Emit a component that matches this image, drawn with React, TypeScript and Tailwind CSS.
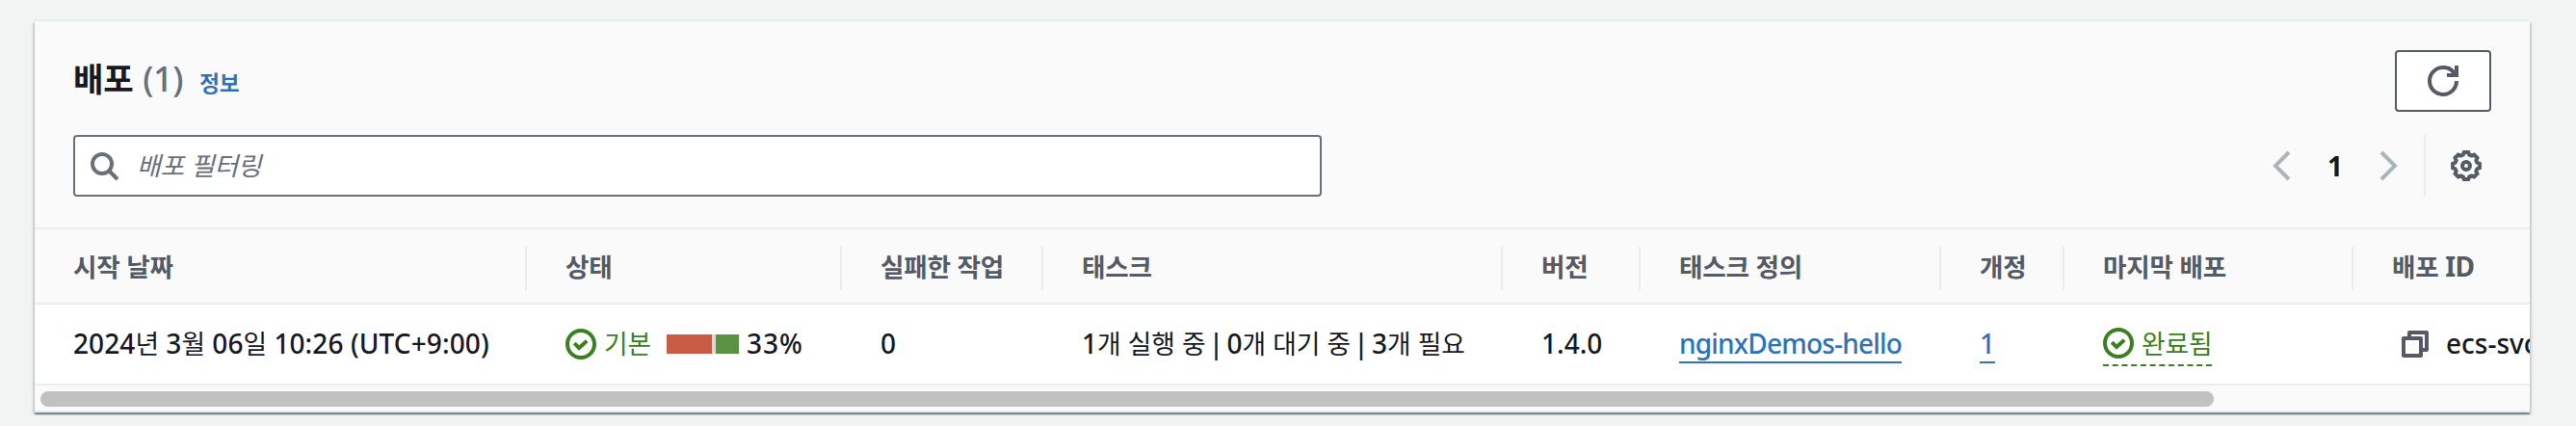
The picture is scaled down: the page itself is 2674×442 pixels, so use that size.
import React from "react";

const HANGUL = /([\u3131-\uD79D]+)/;

/* Hangul runs are set in the CJK family at a slightly smaller advance than the Latin text. */
function T({ children, bold = false }: { children: string; bold?: boolean }) {
  return (
    <>
      {children.split(HANGUL).map((part, i) =>
        HANGUL.test(part) ? (
          <span
            key={i}
            className={
              bold
                ? "text-[0.95em] tracking-[-0.008em] font-bold"
                : "text-[0.955em] tracking-[-0.005em] font-normal"
            }
          >
            {part}
          </span>
        ) : (
          <React.Fragment key={i}>{part}</React.Fragment>
        ),
      )}
    </>
  );
}

function Pipe() {
  return <span className="-mx-[4px] inline-block">|</span>;
}

function CheckCircle() {
  return (
    <svg viewBox="0 0 16 16" className="size-8 shrink-0" fill="none" stroke="currentColor" strokeWidth="2">
      <circle cx="8" cy="8" r="7" />
      <path d="m4.6 7.6 2.4 2.4 4.1-3.6" />
    </svg>
  );
}

function Search() {
  return (
    <svg viewBox="0 0 16 16" className="size-8 shrink-0 text-[#687078]" fill="none" stroke="currentColor" strokeWidth="2">
      <circle cx="7" cy="7" r="5" />
      <path d="m15 15-4.5-4.5" />
    </svg>
  );
}

function Refresh() {
  return (
    <svg viewBox="0 0 16 16" className="size-8" fill="none" stroke="currentColor" strokeWidth="2">
      <path d="M10 5h5V0" />
      <path d="M15 8a6.957 6.957 0 0 1-7 7 6.957 6.957 0 0 1-7-7 6.957 6.957 0 0 1 7-7 6.87 6.87 0 0 1 6.3 4" />
    </svg>
  );
}

function Angle({ d }: { d: string }) {
  return (
    <svg viewBox="0 0 16 16" className="size-8 text-[#aab7b8]" fill="none" stroke="currentColor" strokeWidth="2">
      <path d={d} />
    </svg>
  );
}

function gearPath() {
  const pts: string[] = [];
  for (let i = 0; i < 8; i++) {
    const c = (i * Math.PI) / 4;
    const add = (r: number, a: number) =>
      pts.push(`${(8 + r * Math.cos(c + a)).toFixed(3)} ${(8 + r * Math.sin(c + a)).toFixed(3)}`);
    add(5.9, -0.28);
    add(7.05, -0.16);
    add(7.05, 0.16);
    add(5.9, 0.28);
  }
  return `M${pts.join("L")}Z`;
}

function Gear() {
  return (
    <svg viewBox="0 0 16 16" className="size-8" fill="none" stroke="currentColor" strokeWidth="2">
      <path d={gearPath()} />
      <circle cx="8" cy="8" r="2" />
    </svg>
  );
}

function Copy() {
  return (
    <svg viewBox="0 0 16 16" className="size-8 shrink-0 text-[#545b64]" fill="none" stroke="currentColor" strokeWidth="2" strokeLinejoin="round">
      <path d="M2 5h9v9H2z" />
      <path d="M5 5V2h9v9h-3" />
    </svg>
  );
}

const headers = ["시작 날짜", "상태", "실패한 작업", "태스크", "버전", "태스크 정의", "개정", "마지막 배포", "배포 ID"];

const grid = "grid grid-cols-[511px_327px_209px_477px_143px_312px_128px_300px_600px]";

export default function App() {
  return (
    <div className="h-[442px] w-[2674px] bg-[#f2f3f3] pt-[22px] pl-9 font-['Noto_Sans','Noto_Sans_CJK_KR',sans-serif] text-[28px] leading-10 text-[#16191f]">
      <main className="flex h-[406px] w-[2590px] flex-col overflow-hidden border-b-2 border-[#eaeded] bg-[#fafafa] shadow-[0_2px_1px_0_rgba(0,28,36,0.35),2px_2px_2px_0_rgba(0,28,36,0.15),-2px_2px_2px_0_rgba(0,28,36,0.15),0_-2px_0_0_#eaeded]">
        <header className="flex h-[118px] shrink-0 items-start justify-between pt-[30px] pr-10 pl-10">
          <div className="flex items-baseline pt-2">
            <h2 className="text-[36px] leading-[44px] font-bold">
              <T bold>배포</T>
            </h2>
            <span className="ml-[10px] text-[36px] leading-[44px] font-medium tracking-[-0.5px] text-[#687078]">(1)</span>
            <a className="ml-[17px] text-[24px] font-bold text-[#2e73b8]">
              <T bold>정보</T>
            </a>
          </div>
          <button className="flex h-16 w-[100px] items-center justify-center rounded-[4px] border-2 border-[#545b64] bg-white text-[#545b64]">
            <Refresh />
          </button>
        </header>

        <div className="flex h-24 shrink-0 items-start pr-10 pl-10">
          <label className="flex h-16 w-[1296px] items-center rounded-[4px] border-2 border-[#687078] bg-white pl-[14px] text-[#687078] italic">
            <Search />
            <span className="ml-[18px] pb-px tracking-[-0.3px]">
              <T>배포 필터링</T>
            </span>
          </label>
          <div className="ml-auto flex h-16 items-center">
            <Angle d="M12 1 5 8l7 7" />
            <span className="w-[80px] text-center font-bold">1</span>
            <Angle d="m4 1 7 7-7 7" />
            <span className="ml-[20px] h-16 w-[2px] bg-[#eaeded]" />
            <span className="mr-[10px] ml-[26px] text-[#545b64]">
              <Gear />
            </span>
          </div>
        </div>

        <div className={`${grid} h-20 shrink-0 border-y-2 border-[#eaeded]`}>
          {headers.map((h) => (
            <div key={h} className="my-[18px] flex items-center border-r-2 border-[#eaeded] pb-1 pl-10 font-bold tracking-[-0.6px] whitespace-nowrap text-[#545b64]">
              <span>
                <T bold>{h}</T>
              </span>
            </div>
          ))}
        </div>

        <div className={`${grid} h-[84px] shrink-0 items-center border-b-2 border-[#eaeded] bg-white font-medium whitespace-nowrap`}>
          <div className="pb-[2px] pl-10 tracking-[0.1px]">
            <T>2024년 3월 06일 10:26 (UTC+9:00)</T>
          </div>
          <div className="flex items-center pl-10">
            <span className="flex items-center gap-2 text-[#3a801e]">
              <CheckCircle />
              <span className="pb-[2px]">
                <T>기본</T>
              </span>
            </span>
            <span className="ml-4 flex h-5 w-[75px] bg-[#d5dbdb]">
              <span className="h-5 w-[47px] bg-[#c75d45]" />
              <span className="ml-auto h-5 w-[24px] bg-[#5a9142]" />
            </span>
            <span className="ml-2 pb-[2px] tracking-[1px]">33%</span>
          </div>
          <div className="pb-[2px] pl-10">0</div>
          <div className="pb-[2px] pl-10">
            <T>1개 실행 중 </T>
            <Pipe />
            <T> 0개 대기 중 </T>
            <Pipe />
            <T> 3개 필요</T>
          </div>
          <div className="pb-[2px] pl-10">1.4.0</div>
          <div className="flex pl-10">
            <a className="block h-10 border-b-2 border-[#2e73b8] leading-[38px] tracking-[-0.8px] text-[#2e73b8]">nginxDemos-hello</a>
          </div>
          <div className="flex pl-10">
            <a className="block h-10 border-b-2 border-[#2e73b8] leading-[38px] text-[#2e73b8]">1</a>
          </div>
          <div className="flex pl-10">
            <span className="mt-1 flex h-[42px] items-start gap-2 border-b-2 border-dashed border-[#3a801e] pt-[2px] leading-[34px] text-[#3a801e]">
              <CheckCircle />
              <span className="-mt-px">
                <T>완료됨</T>
              </span>
            </span>
          </div>
          <div className="flex items-center pl-12">
            <Copy />
            <span className="ml-4 pb-[2px]">ecs-svc/</span>
          </div>
        </div>

        <div className="flex shrink-0 items-center pt-[6px] pl-[6px]">
          <span className="h-4 w-[2256px] rounded-full bg-[#c1c1c1]" />
        </div>
      </main>
    </div>
  );
}
